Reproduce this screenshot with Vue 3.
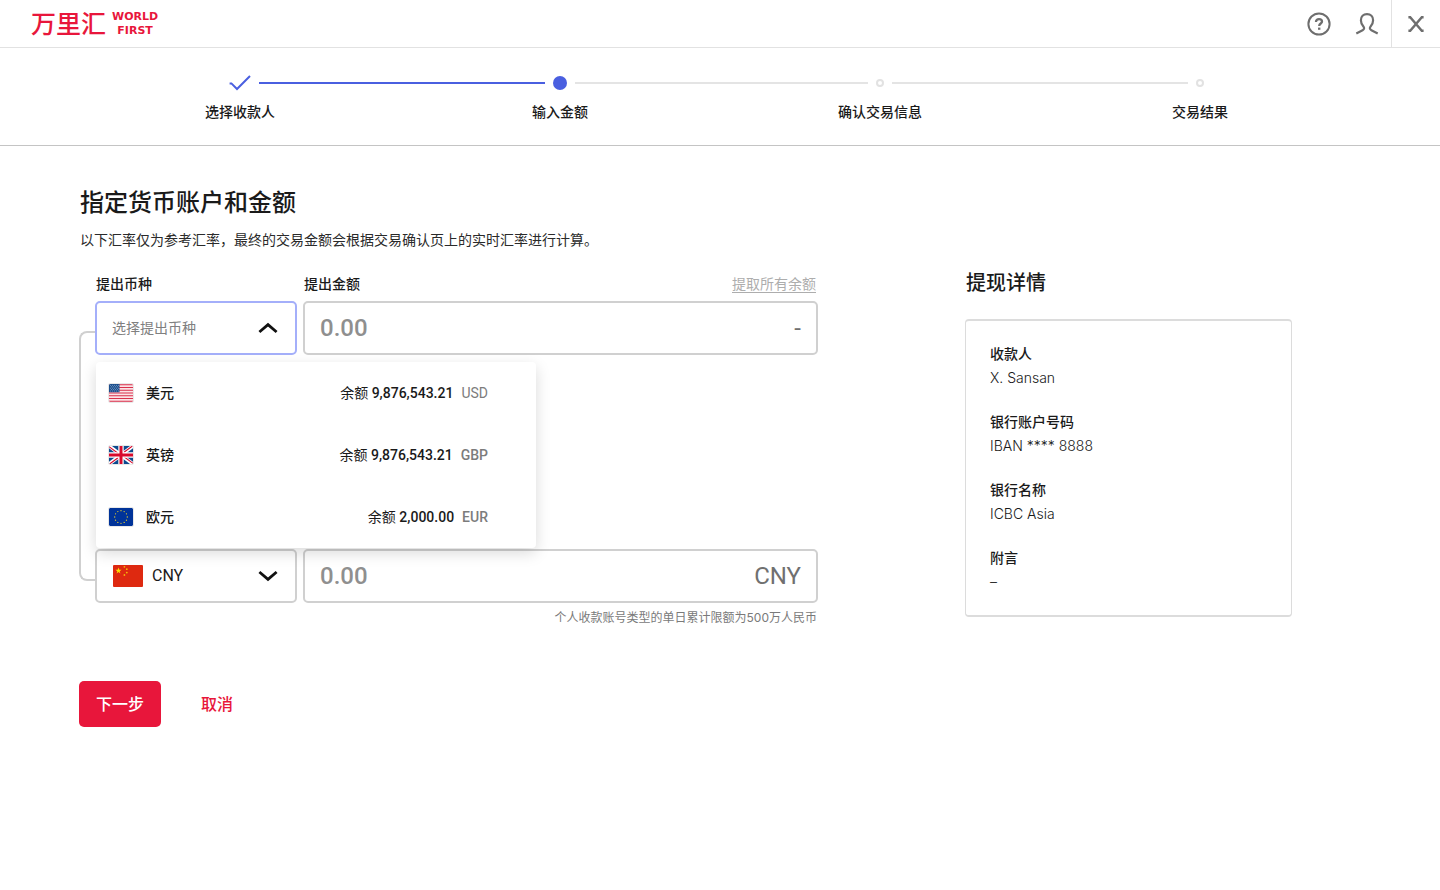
<script setup>
import { ref } from 'vue'

const steps = [
  { label: '选择收款人', state: 'done' },
  { label: '输入金额', state: 'current' },
  { label: '确认交易信息', state: 'todo' },
  { label: '交易结果', state: 'todo' },
]

const currencies = [
  { code: 'USD', name: '美元', balance: '9,876,543.21' },
  { code: 'GBP', name: '英镑', balance: '9,876,543.21' },
  { code: 'EUR', name: '欧元', balance: '2,000.00' },
]

const details = [
  { term: '收款人', value: 'X. Sansan' },
  { term: '银行账户号码', value: 'IBAN **** 8888' },
  { term: '银行名称', value: 'ICBC Asia' },
  { term: '附言', value: '–' },
]

const source = ref('')
const target = ref('CNY')
const open = ref(true)
const sourceAmount = ref('')
const targetAmount = ref('')

const euStars = Array.from({ length: 12 }, (_, i) => {
  const a = (i * Math.PI) / 6
  return { x: 12 + 6.3 * Math.sin(a), y: 9 - 6.3 * Math.cos(a) }
})

function pick(code) {
  source.value = code
  open.value = false
}
</script>

<template>
  <div class="page" lang="zh-CN">
    <header class="topbar">
      <a class="logo" href="#" aria-label="万里汇 WORLD FIRST">
        <span class="logo-cn">万里汇</span>
        <span class="logo-en"><span>WORLD</span><span>FIRST</span></span>
      </a>
      <div class="tools">
        <button type="button" class="tool" aria-label="帮助">
          <svg width="24" height="24" viewBox="0 0 24 24" fill="none" stroke="#6e6e6e">
            <circle cx="12" cy="12" r="10.6" stroke-width="2" />
            <path d="M9 10C9 8.1 10.2 7.1 12 7.1s3 1 3 2.6c0 1.7-2.8 2-2.8 4.2" stroke-width="2.3" />
            <path d="M11 15.6h2.4v2.2H11z" fill="#6e6e6e" stroke="none" />
          </svg>
        </button>
        <button type="button" class="tool" aria-label="账户">
          <svg width="24" height="24" viewBox="0 0 24 24" fill="none" stroke="#6e6e6e" stroke-width="2.2">
            <path d="M1.3 21.4L7.6 18.2C9.3 17.3 9.6 15.9 8.4 14.5C6.8 12.7 5.9 10.7 5.9 8.2C5.9 4.6 8.3 2.2 12 2.2S18.1 4.6 18.1 8.2C18.1 10.7 17.2 12.7 15.6 14.5C14.4 15.9 14.7 17.3 16.4 18.2L22.7 21.4" />
          </svg>
        </button>
        <button type="button" class="tool close" aria-label="关闭">
          <svg width="16" height="16" viewBox="0 0 16 16" fill="none" stroke="#6e6e6e" stroke-width="2.4">
            <path d="M.4 1.2H2.2L13.8 14.8H15.6M15.6 1.2H13.8L2.2 14.8H.4" />
          </svg>
        </button>
      </div>
    </header>

    <nav class="steps" aria-label="进度">
      <ol>
        <li v-for="s in steps" :key="s.label" :class="s.state">
          <div class="track">
            <span class="line before"></span>
            <span class="marker">
              <svg v-if="s.state === 'done'" width="22" height="16" viewBox="0 0 22 16" fill="none" stroke="#4a5fe0" stroke-width="2">
                <path d="M.6 8.4H2.4L8 14L21 1" />
              </svg>
              <span v-else class="dot"></span>
            </span>
            <span class="line after"></span>
          </div>
          <span class="step-label">{{ s.label }}</span>
        </li>
      </ol>
    </nav>

    <main class="content">
      <form class="left" @submit.prevent>
        <h1>指定货币账户和金额</h1>
        <p class="desc">以下汇率仅为参考汇率，最终的交易金额会根据交易确认页上的实时汇率进行计算。</p>

        <div class="fields">
          <span class="bracket"></span>
          <label class="label source-label" for="source">提出币种</label>
          <div class="amount-head">
            <label class="label" for="source-amount">提出金额</label>
            <a href="#" class="all">提取所有余额</a>
          </div>

          <div class="picker source-picker" :class="{ open }">
            <select id="source" v-model="source" class="source-select" @mousedown.prevent="open = !open">
              <option value="" disabled>选择提出币种</option>
              <option v-for="c in currencies" :key="c.code" :value="c.code">{{ c.name }}</option>
            </select>
            <svg class="chevron" width="20" height="12" viewBox="0 0 20 12" fill="none" stroke="#111" stroke-width="2.8">
              <path :d="open ? 'M1.4 10L10 2.6L18.6 10' : 'M1.4 2L10 9.4L18.6 2'" />
            </svg>

            <ul v-if="open" class="menu">
              <li v-for="c in currencies" :key="c.code">
                <button type="button" class="option" @click="pick(c.code)">
                  <svg v-if="c.code === 'USD'" class="flag" width="24" height="18" viewBox="0 0 24 18">
                    <path fill="#fbe3e6" d="M0 0h24v18H0z" />
                    <path stroke="#d9304c" stroke-width="1.1" d="M0 .7h24M0 3.5h24M0 6.2h24M0 9h24M0 11.8h24M0 14.5h24M0 17.3h24" />
                    <path fill="#1d4f8c" d="M0 0h10.5v8.3H0z" />
                    <path stroke="#8fb2d6" stroke-width=".7" stroke-dasharray="1 1" d="M1 1.4h9M2 2.8h8M1 4.2h9M2 5.6h8M1 7h9" />
                  </svg>
                  <svg v-else-if="c.code === 'GBP'" class="flag" width="24" height="18" viewBox="0 0 24 18">
                    <path fill="#0c4a8e" d="M0 0h24v18H0z" />
                    <path stroke="#fff" stroke-width="3.6" d="M0 0l24 18M24 0L0 18" />
                    <path stroke="#d80a2c" stroke-width="1.1" d="M0 .6l11 8.2M24 17.4L13 9.2M23.4 0L12.6 8M.6 18L11.4 10" />
                    <path stroke="#fff" stroke-width="5.4" d="M12 0v18M0 9h24" />
                    <path stroke="#d80a2c" stroke-width="3" d="M12 0v18M0 9h24" />
                  </svg>
                  <svg v-else class="flag" width="24" height="18" viewBox="0 0 24 18">
                    <path fill="#003399" d="M0 0h24v18H0z" />
                    <circle v-for="(p, i) in euStars" :key="i" :cx="p.x" :cy="p.y" r=".65" fill="#e8cf2a" />
                  </svg>
                  <span class="name">{{ c.name }}</span>
                  <span class="balance">余额 <b>{{ c.balance }}</b></span>
                  <span class="code" :class="{ light: c.code === 'USD' }">{{ c.code }}</span>
                </button>
              </li>
            </ul>
          </div>

          <div class="amount source-box">
            <input id="source-amount" v-model="sourceAmount" placeholder="0.00" inputmode="decimal" />
            <span class="unit">-</span>
          </div>

          <div class="picker target-picker">
            <svg class="cn-flag" width="30" height="22" viewBox="0 0 30 22">
              <path fill="#de2910" d="M0 0h30v22H0z" />
              <path fill="#ffde00" d="M5.5 2.6l.8 2.2h2.3l-1.9 1.4.7 2.2-1.9-1.3-1.9 1.3.7-2.2-1.9-1.4h2.3z" />
              <g fill="#f5b50a">
                <circle cx="11.4" cy="1.8" r=".9" />
                <circle cx="13.8" cy="4.2" r=".9" />
                <circle cx="13.8" cy="7.6" r=".9" />
                <circle cx="11.4" cy="10" r=".9" />
              </g>
            </svg>
            <select v-model="target" class="target-select" aria-label="到账币种">
              <option value="CNY">CNY</option>
            </select>
            <svg class="chevron" width="20" height="12" viewBox="0 0 20 12" fill="none" stroke="#111" stroke-width="2.8">
              <path d="M1.4 2L10 9.4L18.6 2" />
            </svg>
          </div>

          <div class="amount target-box">
            <input v-model="targetAmount" aria-label="到账金额" placeholder="0.00" inputmode="decimal" />
            <span class="unit">CNY</span>
          </div>
          <p class="note">个人收款账号类型的单日累计限额为500万人民币</p>
        </div>

        <div class="actions">
          <button type="submit" class="next">下一步</button>
          <button type="button" class="cancel">取消</button>
        </div>
      </form>

      <aside class="right">
        <h2>提现详情</h2>
        <dl class="card">
          <div v-for="d in details" :key="d.term" class="entry">
            <dt>{{ d.term }}</dt>
            <dd>{{ d.value }}</dd>
          </div>
        </dl>
      </aside>
    </main>
  </div>
</template>

<style>
body {
  background: #fff;
}
</style>

<style scoped>
.page {
  font-family: Inter, "Noto Sans CJK SC", sans-serif;
  font-size: 14px;
  line-height: 20px;
  color: #1a1a1a;
}
.page * {
  box-sizing: border-box;
}
h1, h2, p, ol, ul, dl, dd {
  margin: 0;
  padding: 0;
}
ol, ul {
  list-style: none;
}
button, input, select {
  margin: 0;
  padding: 0;
  border: 0;
  background: none;
  font: inherit;
  color: inherit;
  cursor: pointer;
}
svg {
  display: block;
  flex: none;
}

.topbar {
  display: flex;
  justify-content: space-between;
  height: 48px;
  padding-left: 31px;
  border-bottom: 1px solid #e2e2e2;
}
.logo {
  display: flex;
  align-items: center;
  gap: 6px;
  color: #e8163b;
  text-decoration: none;
}
.logo-cn {
  padding-bottom: 4px;
  font-family: "Noto Sans CJK SC", sans-serif;
  font-size: 25px;
  font-weight: 500;
  line-height: 40px;
}
.logo-en {
  display: flex;
  flex-direction: column;
  align-items: center;
  font-family: "DejaVu Sans", sans-serif;
  font-weight: 700;
  font-size: 11px;
  line-height: 14px;
}
.tools {
  display: flex;
}
.tool {
  display: flex;
  align-items: center;
  justify-content: center;
  width: 48px;
}
.close {
  width: 49px;
  border-left: 1px solid #e2e2e2;
}

.steps {
  padding: 25px 80px 23px;
  border-bottom: 1px solid #c4c4c4;
}
.steps ol {
  display: grid;
  grid-template-columns: repeat(4, 1fr);
}
.steps li {
  text-align: center;
}
.track {
  display: flex;
  align-items: center;
  height: 20px;
  margin-bottom: 9px;
}
.line {
  flex: 1;
  height: 2px;
  background: #e4e4e4;
}
.done .line.after,
.current .line.before {
  background: #4a5fe0;
}
li:first-child .before,
li:last-child .after {
  visibility: hidden;
}
.marker {
  display: flex;
  justify-content: center;
  width: 24px;
}
.done .marker {
  width: 38px;
}
.current .marker {
  width: 30px;
}
.dot {
  width: 8px;
  height: 8px;
  border: 2px solid #e2e2e2;
  border-radius: 50%;
}
.current .dot {
  width: 14px;
  height: 14px;
  border: 0;
  background: #4a5fe0;
}
.step-label {
  font-weight: 500;
}

.content {
  display: grid;
  grid-template-columns: minmax(0, 739fr) minmax(0, 327fr);
  column-gap: 147px;
  align-items: start;
  padding: 41px 148px 40px 79px;
}
h1 {
  padding-left: 1px;
  font-size: 24px;
  font-weight: 500;
  line-height: 32px;
}
.desc {
  margin-top: 11px;
  padding-left: 1px;
  color: #2a2a2a;
}
.fields {
  display: grid;
  grid-template-columns: 16px 202px minmax(0, 1fr);
  grid-template-rows: 27px 54px 194px 54px 24px;
  margin-top: 24px;
}
.label {
  padding-left: 1px;
  font-weight: 500;
}
.source-label {
  grid-area: 1 / 2;
}
.amount-head {
  grid-area: 1 / 3;
  display: flex;
  justify-content: space-between;
  padding: 0 2px 0 6px;
}
.all {
  color: #adadad;
  text-decoration: underline;
  text-underline-offset: 3px;
}
.bracket {
  grid-area: 2 / 1 / 5 / 2;
  margin: 30px 0 22px;
  border: 2px solid #d0d0d0;
  border-right: 0;
  border-radius: 8px 0 0 8px;
}
.picker {
  position: relative;
  display: flex;
  align-items: center;
  padding: 0 15px;
  border: 2px solid #d0d0d0;
  border-radius: 5px;
  background: #fff;
}
.picker.open {
  border-color: #a4affa;
}
.source-picker {
  grid-area: 2 / 2;
}
.target-picker {
  grid-area: 4 / 2;
}
.picker select {
  flex: 1;
  align-self: stretch;
  min-width: 0;
  appearance: none;
  outline: 0;
}
.source-select {
  color: #808080;
}
.target-select {
  margin-left: 9px;
  font-family: Roboto, sans-serif;
  font-size: 16px;
  color: #1a1a1a;
}
.picker .chevron {
  margin-right: 2px;
  pointer-events: none;
}
.cn-flag {
  margin-left: 1px;
  border-radius: 1px;
}
.amount {
  display: flex;
  align-items: center;
  margin-left: 6px;
  padding: 0 15px;
  border: 2px solid #d0d0d0;
  border-radius: 5px;
  font-family: Roboto, sans-serif;
  font-size: 24px;
  line-height: 32px;
}
.source-box {
  grid-area: 2 / 3;
}
.target-box {
  grid-area: 4 / 3;
}
.amount input {
  flex: 1;
  min-width: 0;
  outline: 0;
  cursor: text;
}
.amount input::placeholder {
  color: #8f8f8f;
  opacity: 1;
  font-weight: 500;
}
.unit {
  color: #707070;
}
.note {
  grid-area: 5 / 2 / 6 / 4;
  padding: 5px 1px 0 0;
  font-size: 12px;
  text-align: right;
  color: #7a7a7a;
}

.menu {
  position: absolute;
  z-index: 2;
  top: 59px;
  left: -1px;
  width: 440px;
  border-radius: 4px;
  background: #fff;
  box-shadow: 0 5px 15px rgba(0, 0, 0, 0.15);
}
.option {
  display: flex;
  align-items: center;
  width: 100%;
  height: 62px;
  padding: 0 48px 0 13px;
  font-family: Roboto, "Noto Sans CJK SC", sans-serif;
  text-align: left;
}
.flag {
  outline: 1px solid #e8e8e8;
  border-radius: 1px;
}
.name {
  flex: 1;
  margin-left: 13px;
  font-weight: 500;
}
.balance b {
  font-weight: 500;
}
.code {
  margin-left: 8px;
  font-weight: 500;
  color: #7c7c7c;
}
.code.light {
  font-weight: 400;
}

.actions {
  display: flex;
  margin-top: 54px;
  font-size: 16px;
  font-weight: 500;
}
.next {
  padding: 11px 17px;
  border-radius: 5px;
  background: #e8163b;
  color: #fff;
  line-height: 24px;
}
.cancel {
  padding: 11px 16px;
  margin-left: 24px;
  color: #e8163b;
  line-height: 24px;
}

.right {
  padding-top: 82px;
}
h2 {
  padding-left: 1px;
  font-size: 20px;
  font-weight: 500;
  line-height: 28px;
}
.card {
  display: grid;
  gap: 20px;
  margin-top: 22px;
  padding: 21px 24px;
  border: solid #dcdcdc;
  border-width: 2px 1px;
  border-radius: 4px;
  line-height: 24px;
}
dt {
  font-weight: 500;
}
dd {
  font-weight: 300;
}
</style>
